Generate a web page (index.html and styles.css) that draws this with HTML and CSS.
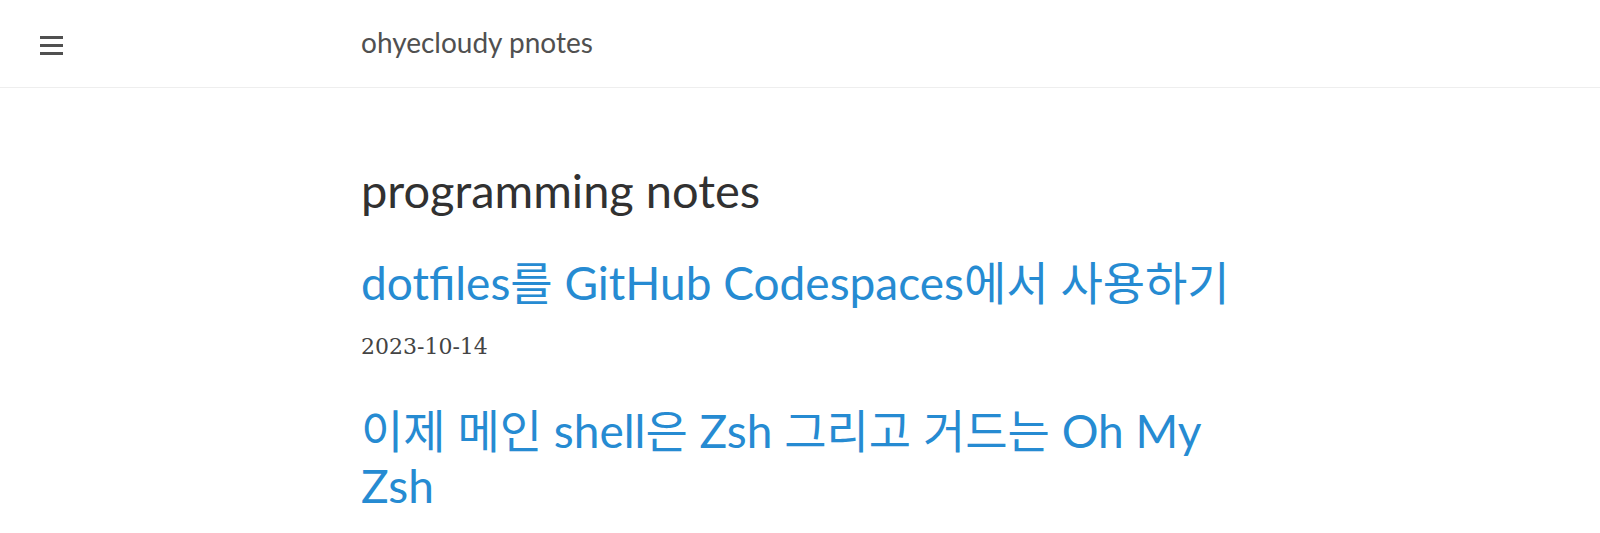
FILE: index.html
```html
<!DOCTYPE html>
<html lang="ko">
  <head>
    <meta charset="utf-8">
    <title>ohyecloudy pnotes</title>
    <link rel="stylesheet" href="styles.css">
  </head>
<body>

<div class="masthead">
  <a href="#" class="sidebar-toggle">
    <svg width="23" height="19" viewBox="0 0 23 19">
      <rect x="0" y="0" width="23" height="3" />
      <rect x="0" y="8" width="23" height="3" />
      <rect x="0" y="16" width="23" height="3" />
    </svg>
  </a>
  <h3 class="masthead-title"><a href="#">ohyecloudy pnotes</a></h3>
</div>

<div class="container">
  <h1 class="page-title">programming notes</h1>

  <div class="post">
    <h2 class="post-title"><a href="#">dotfiles를 GitHub Codespaces에서 사용하기</a></h2>
    <span class="post-date">2023-10-14</span>
  </div>

  <div class="post">
    <h2 class="post-title"><a href="#">이제 메인 shell은 Zsh 그리고 거드는 Oh My Zsh</a></h2>
  </div>
</div>

</body>
</html>
```

FILE: styles.css
```css
body {
    margin: 0;
    font-family: Lato, "Noto Sans CJK KR", sans-serif;
    color: #313131;
    background: #fff;
}
a {
    color: #268bd2;
    text-decoration: none;
}
.masthead {
    display: grid;
    grid-template-columns: 1fr 878px 1fr;
    align-items: start;
    height: 87px;
    border-bottom: 1px solid #eee;
}
.sidebar-toggle {
    margin: 36px 0 0 40px;
    line-height: 0;
}
.sidebar-toggle svg {
    fill: #505050;
}
.masthead-title {
    margin: 25px 0 0;
    font-size: 28px;
    font-weight: normal;
    line-height: 34px;
}
.masthead-title a {
    color: #505050;
}
.container {
    max-width: 878px;
    margin: 0 auto;
    padding-top: 76px;
}
.page-title {
    margin: 0;
    font-size: 47px;
    font-weight: normal;
    line-height: 52px;
}
.post-title {
    margin: 39px 0 0;
    font-size: 46px;
    font-weight: normal;
    line-height: 55px;
    word-break: keep-all;
}
.post + .post .post-title {
    margin-top: 41px;
}
.post-date {
    display: block;
    margin-top: 22px;
    font-family: "DejaVu Serif", serif;
    font-size: 22px;
    line-height: 30px;
    color: #444;
}
```
